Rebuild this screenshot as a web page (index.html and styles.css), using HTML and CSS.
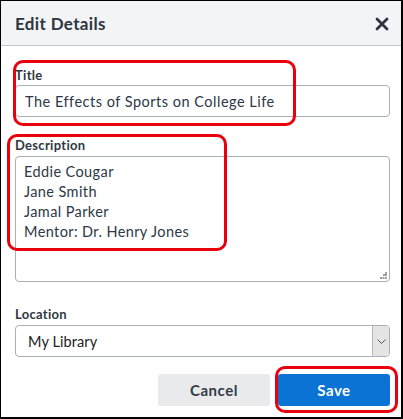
FILE: index.html
```html
<!DOCTYPE html>
<html>
<head>
<meta charset="utf-8">
<link rel="stylesheet" href="styles.css">
</head>
<body>
<div class="dialog">
  <div class="header">
    <h1 class="heading">Edit Details</h1>
    <svg class="close" width="14" height="14" viewBox="0 0 14 14"><path d="M2 2 L12 12 M12 2 L2 12" stroke="#2b3440" stroke-width="2.8" stroke-linecap="round"/></svg>
  </div>
  <div class="content">
    <div class="field field-title">
      <div class="label">Title</div>
      <div class="input">The Effects of Sports on College Life</div>
    </div>
    <div class="field field-desc">
      <div class="label">Description</div>
      <div class="textarea">
        <div>Eddie Cougar</div>
        <div>Jane Smith</div>
        <div>Jamal Parker</div>
        <div>Mentor: Dr. Henry Jones</div>
        <svg class="grip" width="7" height="7" viewBox="0 0 7 7" fill="#9aa0a6"><rect x="5" y="0" width="2" height="2"/><rect x="3" y="2" width="2" height="2"/><rect x="5" y="2" width="2" height="2"/><rect x="0" y="5" width="2" height="2"/><rect x="2.5" y="5" width="2" height="2"/><rect x="5" y="5" width="2" height="2"/></svg>
      </div>
    </div>
    <div class="field field-loc">
      <div class="label">Location</div>
      <div class="select">
        <span class="select-value">My Library</span>
        <span class="select-arrow"><svg width="9" height="5" viewBox="0 0 9 5"><path d="M0.5 0.5 L4.5 4.5 L8.5 0.5" fill="none" stroke="#555" stroke-width="1"/></svg></span>
      </div>
    </div>
    <div class="actions">
      <button class="btn btn-cancel">Cancel</button>
      <button class="btn btn-save">Save</button>
    </div>
  </div>
  <div class="mark mark-title"></div>
  <div class="mark mark-desc"></div>
  <div class="mark mark-save"></div>
</div>
</body>
</html>
```
FILE: styles.css
```css
* { box-sizing: border-box; }
html, body { margin: 0; padding: 0; background: #fff; }
body { font-family: Lato, "Open Sans", "Liberation Sans", sans-serif; color: #333c47; }
.dialog {
  position: relative;
  width: 403px;
  height: 419px;
  border-style: solid;
  border-color: #000;
  border-width: 1px 2px 2px 1px;
  background: #fff;
}
.header {
  height: 45px;
  background: #f3f4f6;
  border-bottom: 1px solid #c3c7cb;
  display: flex;
  align-items: center;
  justify-content: space-between;
  padding: 0 12px 0 14px;
}
.heading {
  margin: 0;
  font-size: 17px;
  font-weight: 700;
  color: #2d3640;
  letter-spacing: 0.35px;
}
.close { display: block; margin-top: 1px; }
.content { padding: 20px 11px 0 14px; }
.label {
  font-size: 13px;
  font-weight: 700;
  line-height: 18px;
  color: #2f3842;
  letter-spacing: 0.3px;
}
.input {
  margin-top: 1px;
  height: 32px;
  border: 1px solid #a9b0b7;
  border-radius: 4px;
  padding: 0 9px;
  display: flex;
  align-items: center;
  font-size: 14.5px;
  color: #2c3846;
  letter-spacing: 0.5px;
}
.field-desc { margin-top: 19px; }
.textarea {
  position: relative;
  margin-top: 2px;
  height: 126px;
  border: 1px solid #a9b0b7;
  border-radius: 4px;
  padding: 5px 8px;
  font-size: 14.5px;
  line-height: 20px;
  color: #2c3846;
  letter-spacing: 0.4px;
}
.grip { position: absolute; right: 2px; bottom: 2px; }
.field-loc { margin-top: 23px; }
.select {
  margin-top: 2px;
  height: 32px;
  border: 1px solid #a9b0b7;
  border-radius: 4px;
  display: flex;
  align-items: stretch;
  overflow: hidden;
}
.select-value {
  flex: 1;
  display: flex;
  align-items: center;
  padding-left: 12px;
  font-size: 14.5px;
  color: #222;
  letter-spacing: 0.1px;
}
.select-arrow {
  width: 17px;
  background: #e4e4e4;
  border-left: 1px solid #b5b5b5;
  display: flex;
  align-items: center;
  justify-content: center;
}
.actions {
  margin-top: 17px;
  display: flex;
  justify-content: flex-end;
  gap: 8px;
}
.btn {
  height: 32px;
  border: none;
  border-radius: 3px;
  font-family: inherit;
  font-size: 15px;
  font-weight: 700;
  letter-spacing: 0.5px;
  padding: 0;
}
.btn-cancel { width: 112px; background: #e9eaeb; color: #333c47; }
.btn-save { width: 112px; background: #0a73d3; color: #fff; }
.mark {
  position: absolute;
  border: 3px solid #e8000c;
  border-radius: 10px;
}
.mark-title { left: 12px; top: 59px; width: 283px; height: 66px; }
.mark-desc { left: 6px; top: 133px; width: 220px; height: 117px; }
.mark-save { left: 274px; top: 365px; width: 123px; height: 47px; }
```
